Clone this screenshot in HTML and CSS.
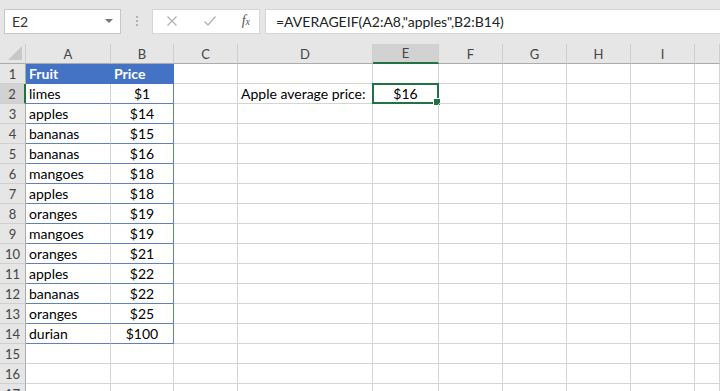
FILE: index.html
```html
<!DOCTYPE html>
<html lang="en">
<head>
  <meta charset="UTF-8">
  <title>AVERAGEIF example</title>
  <link rel="stylesheet" href="styles.css">
</head>
<body>

  <!-- Formula toolbar -->
  <div class="toolbar">
    <div class="name-box">
      <span>E2</span>
      <svg class="caret" width="8" height="5" viewBox="0 0 8 5"><path d="M0 0h8L4 4z" fill="#777"/></svg>
    </div>
    <div class="grip">
      <span></span><span></span><span></span>
    </div>
    <div class="icon-box">
      <svg width="12" height="12" viewBox="0 0 12 12"><path d="M1.5 1.5l9 9M10.5 1.5l-9 9" stroke="#b4b4b4" stroke-width="1.4"/></svg>
      <svg width="14" height="12" viewBox="0 0 14 12"><path d="M1.5 6.5l3.5 3.5 7.5-8.5" stroke="#b4b4b4" stroke-width="1.4" fill="none"/></svg>
      <span class="fx">f<sub>x</sub></span>
    </div>
    <div class="formula">=AVERAGEIF(A2:A8,"apples",B2:B14)</div>
  </div>

  <!-- Sheet grid -->
  <div class="sheet" id="sheet"></div>

  <script>
    const cols = ['', 'A', 'B', 'C', 'D', 'E', 'F', 'G', 'H', 'I', ''];
    const data = [
      ['limes', '$1'], ['apples', '$14'], ['bananas', '$15'], ['bananas', '$16'],
      ['mangoes', '$18'], ['apples', '$18'], ['oranges', '$19'], ['mangoes', '$19'],
      ['oranges', '$21'], ['apples', '$22'], ['bananas', '$22'], ['oranges', '$25'],
      ['durian', '$100']
    ];

    const sheet = document.getElementById('sheet');
    let html = '';

    // Column headers
    cols.forEach((c, i) => {
      let cls = i === 0 ? 'corner' : 'col-head';
      if (c === 'E') cls += ' active';
      html += `<div class="${cls}">${i === 0 ? '<svg width="14" height="14" viewBox="0 0 14 14"><path d="M14 0V14H0z" fill="#c8c8c8"/></svg>' : c}</div>`;
    });

    // Rows
    for (let r = 1; r <= 17; r++) {
      html += `<div class="row-head${r === 2 ? ' active' : ''}">${r}</div>`;
      for (let c = 1; c < cols.length; c++) {
        let cls = 'cell';
        let text = '';
        if (c <= 2 && r <= 14) {
          cls += r === 1 ? ' t-head' : ' t-row';
          if (c === 2) cls += ' t-num';
          if (r === 1) text = c === 1 ? 'Fruit' : 'Price';
          else text = data[r - 2][c - 1];
        }
        if (r === 2 && c === 4) { cls += ' label'; text = 'Apple average price:'; }
        if (r === 2 && c === 5) { cls += ' selected'; text = '$16'; }
        html += `<div class="${cls}">${text}</div>`;
      }
    }
    sheet.innerHTML = html;
  </script>

</body>
</html>
```

FILE: styles.css
```css
/* General Reset */
* {
  margin: 0;
  padding: 0;
  box-sizing: border-box;
}

body {
  font-family: 'Lato', 'Open Sans', sans-serif;
  background-color: #fff;
  color: #000;
  width: 720px;
  height: 391px;
  overflow: hidden;
}

/* Toolbar */
.toolbar {
  display: flex;
  align-items: center;
  height: 44px;
  padding: 0 0 2px 4px;
  background-color: #e6e6e6;
}

.name-box {
  display: flex;
  align-items: center;
  justify-content: space-between;
  width: 117px;
  height: 25px;
  padding: 0 7px 0 7px;
  background-color: #fff;
  border: 1px solid #c6c6c6;
  font-size: 14px;
  color: #333;
}

.grip {
  display: flex;
  flex-direction: column;
  gap: 2px;
  width: 31px;
  align-items: center;
}

.grip span {
  width: 2px;
  height: 2px;
  background-color: #b0b0b0;
}

.icon-box {
  display: flex;
  align-items: center;
  justify-content: space-between;
  width: 108px;
  height: 25px;
  padding: 0 9px 0 13px;
  background-color: #fff;
  border: 1px solid #d6d6d6;
}

.fx {
  font-family: 'Liberation Serif', serif;
  font-style: italic;
  font-size: 14px;
  color: #555;
}

.fx sub {
  font-size: 10px;
  vertical-align: 0;
}

.formula {
  flex: 1;
  height: 25px;
  margin-left: 5px;
  padding-left: 10px;
  line-height: 23px;
  background-color: #fff;
  border: 1px solid #d6d6d6;
  border-right: none;
  font-size: 14px;
  color: #222;
  white-space: nowrap;
}

/* Sheet grid */
.sheet {
  display: grid;
  grid-template-columns: 26px 85px 63px 64px 135px 66px 64px 64px 64px 64px 1fr;
  grid-auto-rows: 20px;
  font-size: 14px;
}

.corner,
.col-head {
  display: flex;
  align-items: center;
  justify-content: center;
  background-color: #e6e6e6;
  border-right: 1px solid #cfcfcf;
  border-bottom: 1px solid #ababab;
  color: #444;
  font-size: 13px;
}

.corner {
  justify-content: flex-end;
  align-items: flex-end;
  padding: 0 3px 3px 0;
}

.col-head.active {
  background-color: #d2d2d2;
  border-bottom: 2px solid #217346;
}

.row-head {
  display: flex;
  align-items: center;
  justify-content: center;
  background-color: #e6e6e6;
  border-right: 1px solid #ababab;
  border-bottom: 1px solid #cfcfcf;
  color: #444;
  font-size: 13px;
}

.row-head.active {
  background-color: #d2d2d2;
  border-right: 2px solid #217346;
}

.cell {
  position: relative;
  display: flex;
  align-items: center;
  padding: 0 3px;
  border-right: 1px solid #d4d4d4;
  border-bottom: 1px solid #d4d4d4;
  white-space: nowrap;
}

/* Table */
.t-head {
  background-color: #4472c4;
  border-color: #4472c4;
  color: #fff;
  font-weight: bold;
}

.t-row {
  border-bottom-color: #5f80bb;
}

.t-num {
  justify-content: center;
  border-right-color: #5f80bb;
}

.t-head.t-num {
  justify-content: flex-start;
  border-right-color: #4472c4;
}

.label {
  padding-left: 3px;
}

.selected {
  justify-content: center;
  border: 2px solid #217346;
  margin: -1px 0 0 -1px;
  width: 67px;
  height: 21px;
}

.selected::after {
  content: '';
  position: absolute;
  right: -4px;
  bottom: -4px;
  width: 6px;
  height: 6px;
  background-color: #217346;
  border: 1px solid #fff;
}
```
